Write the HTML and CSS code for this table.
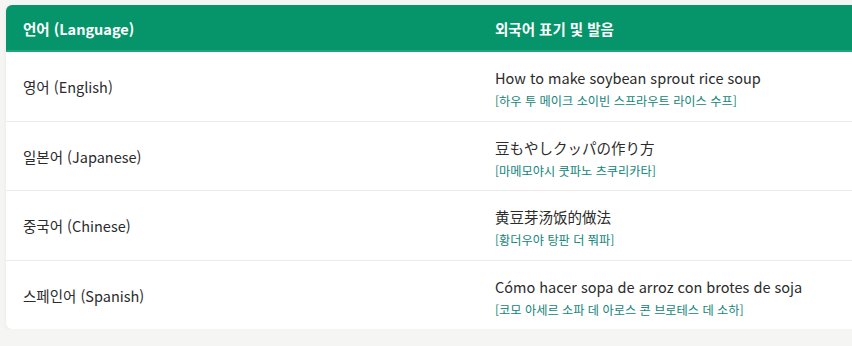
FILE: index.html
```html
<!DOCTYPE html>
<html lang="ko">
<head>
<meta charset="utf-8">
<title>외국어 표기</title>
<link rel="stylesheet" href="styles.css">
</head>
<body>
<div class="card">
  <table class="lang-table">
    <thead>
      <tr>
        <th class="col-lang">언어 (Language)</th>
        <th>외국어 표기 및 발음</th>
      </tr>
    </thead>
    <tbody>
      <tr>
        <td>영어 (English)</td>
        <td>
          <div class="main">How to make soybean sprout rice soup</div>
          <div class="pron">[하우 투 메이크 소이빈 스프라우트 라이스 수프]</div>
        </td>
      </tr>
      <tr>
        <td>일본어 (Japanese)</td>
        <td>
          <div class="main">豆もやしクッパの作り方</div>
          <div class="pron">[마메모야시 쿳파노 츠쿠리카타]</div>
        </td>
      </tr>
      <tr>
        <td>중국어 (Chinese)</td>
        <td>
          <div class="main">黄豆芽汤饭的做法</div>
          <div class="pron">[황더우야 탕판 더 쭤파]</div>
        </td>
      </tr>
      <tr>
        <td>스페인어 (Spanish)</td>
        <td>
          <div class="main">Cómo hacer sopa de arroz con brotes de soja</div>
          <div class="pron">[코모 아세르 소파 데 아로스 콘 브로테스 데 소하]</div>
        </td>
      </tr>
    </tbody>
  </table>
</div>
</body>
</html>
```

FILE: styles.css
```css
html, body {
  margin: 0;
  padding: 0;
  background: #f5f6f4;
  overflow: hidden;
}
body {
  padding: 5px 0 0 6px;
  font-family: "Noto Sans CJK KR", "Noto Sans", sans-serif;
  color: #2b2b2b;
}
.card {
  width: 944px;
  background: #ffffff;
  border-radius: 6px;
  overflow: hidden;
  box-shadow: 0 1px 4px rgba(0, 0, 0, 0.06);
}
.lang-table {
  width: 100%;
  border-collapse: collapse;
  table-layout: fixed;
}
.lang-table th {
  background: #06956a;
  color: #ffffff;
  font-weight: 700;
  font-size: 14.5px;
  line-height: 22px;
  text-align: left;
  padding: 13px 17px 10px 17px;
  border-bottom: 2px solid #1fa67a;
}
.col-lang {
  width: 438px;
}
.lang-table td {
  font-size: 14.5px;
  line-height: 22px;
  padding: 12px 17px 10.5px 17px;
  border-bottom: 1px solid #ebebeb;
  vertical-align: middle;
}
.lang-table tbody tr:last-child td {
  border-bottom: none;
}
.main {
  color: #2b2b2b;
  line-height: 28px;
}
.pron {
  font-size: 12.2px;
  line-height: 18px;
  color: #128579;
}
```
